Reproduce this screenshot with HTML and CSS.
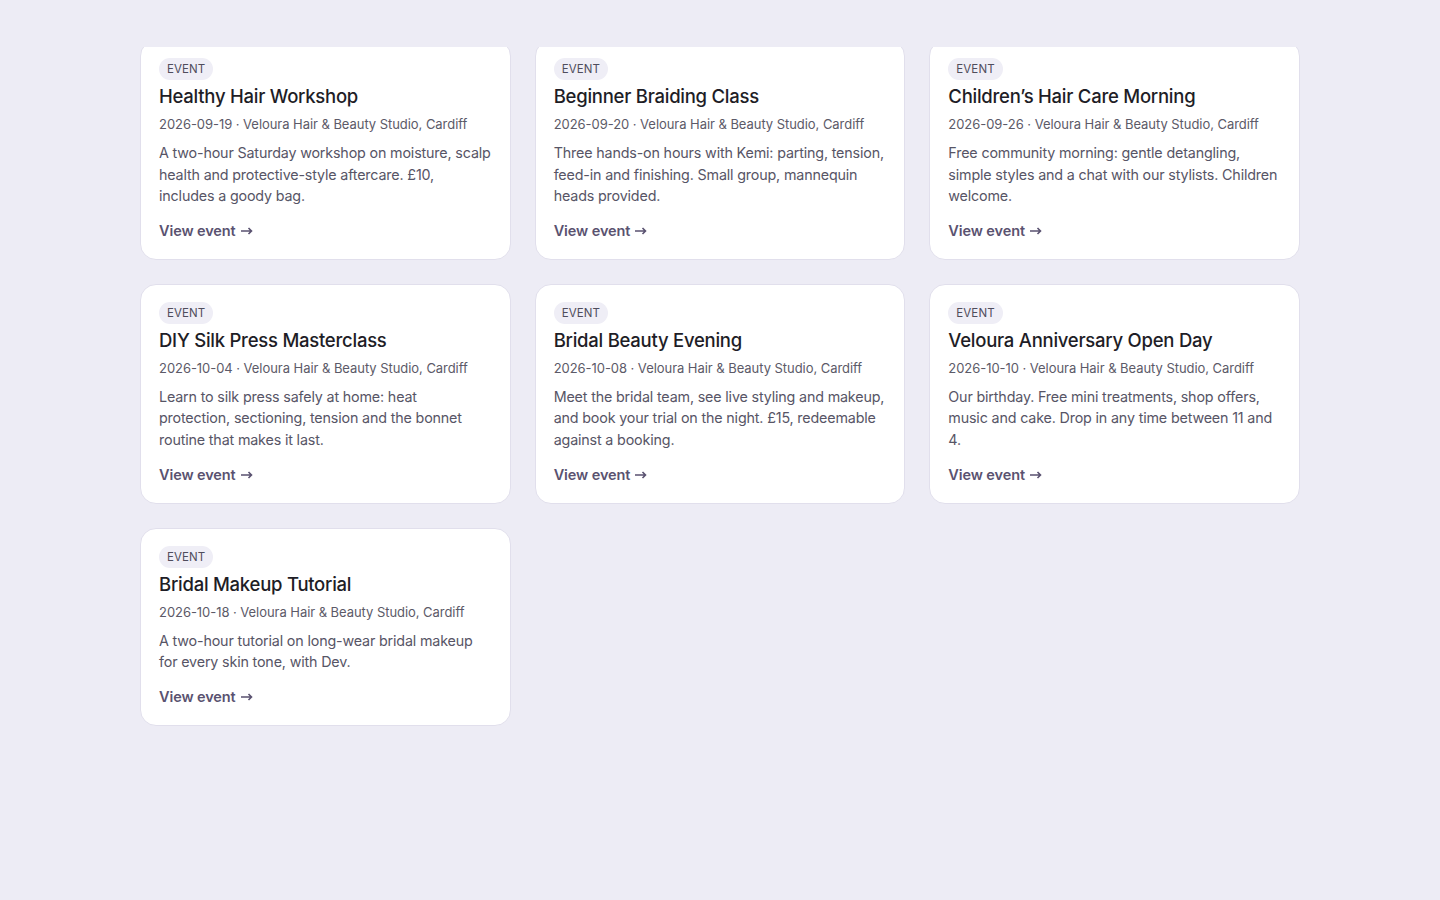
FILE: index.html
```html
<!DOCTYPE html>
<html lang="en">
<head>
  <meta charset="UTF-8" />
  <meta name="viewport" content="width=device-width, initial-scale=1.0"/>
  <title>Events – Veloura Hair &amp; Beauty Studio</title>
  <link rel="stylesheet" href="styles.css">
</head>
<body>

  <header class="topbar"></header>

  <main class="event-grid">
    <!-- Healthy Hair Workshop -->
    <article class="event-card">
      <span class="badge">EVENT</span>
      <h3>Healthy Hair Workshop</h3>
      <p class="meta">2026-09-19 · Veloura Hair &amp; Beauty Studio, Cardiff</p>
      <p class="desc">A two-hour Saturday workshop on moisture, scalp health and protective-style aftercare. £10, includes a goody bag.</p>
      <a class="more" href="#">View event <svg class="arrow" viewBox="0 0 12 8" width="12" height="8"><path d="M0 4h10.5M7.5 1l3 3-3 3" fill="none" stroke="currentColor" stroke-width="1.6"/></svg></a>
    </article>

    <!-- Beginner Braiding Class -->
    <article class="event-card">
      <span class="badge">EVENT</span>
      <h3>Beginner Braiding Class</h3>
      <p class="meta">2026-09-20 · Veloura Hair &amp; Beauty Studio, Cardiff</p>
      <p class="desc">Three hands-on hours with Kemi: parting, tension, feed-in and finishing. Small group, mannequin heads provided.</p>
      <a class="more" href="#">View event <svg class="arrow" viewBox="0 0 12 8" width="12" height="8"><path d="M0 4h10.5M7.5 1l3 3-3 3" fill="none" stroke="currentColor" stroke-width="1.6"/></svg></a>
    </article>

    <!-- Children's Hair Care Morning -->
    <article class="event-card">
      <span class="badge">EVENT</span>
      <h3>Children’s Hair Care Morning</h3>
      <p class="meta">2026-09-26 · Veloura Hair &amp; Beauty Studio, Cardiff</p>
      <p class="desc">Free community morning: gentle detangling, simple styles and a chat with our stylists. Children welcome.</p>
      <a class="more" href="#">View event <svg class="arrow" viewBox="0 0 12 8" width="12" height="8"><path d="M0 4h10.5M7.5 1l3 3-3 3" fill="none" stroke="currentColor" stroke-width="1.6"/></svg></a>
    </article>

    <!-- DIY Silk Press Masterclass -->
    <article class="event-card">
      <span class="badge">EVENT</span>
      <h3>DIY Silk Press Masterclass</h3>
      <p class="meta">2026-10-04 · Veloura Hair &amp; Beauty Studio, Cardiff</p>
      <p class="desc">Learn to silk press safely at home: heat protection, sectioning, tension and the bonnet routine that makes it last.</p>
      <a class="more" href="#">View event <svg class="arrow" viewBox="0 0 12 8" width="12" height="8"><path d="M0 4h10.5M7.5 1l3 3-3 3" fill="none" stroke="currentColor" stroke-width="1.6"/></svg></a>
    </article>

    <!-- Bridal Beauty Evening -->
    <article class="event-card">
      <span class="badge">EVENT</span>
      <h3>Bridal Beauty Evening</h3>
      <p class="meta">2026-10-08 · Veloura Hair &amp; Beauty Studio, Cardiff</p>
      <p class="desc">Meet the bridal team, see live styling and makeup, and book your trial on the night. £15, redeemable against a booking.</p>
      <a class="more" href="#">View event <svg class="arrow" viewBox="0 0 12 8" width="12" height="8"><path d="M0 4h10.5M7.5 1l3 3-3 3" fill="none" stroke="currentColor" stroke-width="1.6"/></svg></a>
    </article>

    <!-- Veloura Anniversary Open Day -->
    <article class="event-card">
      <span class="badge">EVENT</span>
      <h3>Veloura Anniversary Open Day</h3>
      <p class="meta">2026-10-10 · Veloura Hair &amp; Beauty Studio, Cardiff</p>
      <p class="desc">Our birthday. Free mini treatments, shop offers, music and cake. Drop in any time between 11 and 4.</p>
      <a class="more" href="#">View event <svg class="arrow" viewBox="0 0 12 8" width="12" height="8"><path d="M0 4h10.5M7.5 1l3 3-3 3" fill="none" stroke="currentColor" stroke-width="1.6"/></svg></a>
    </article>

    <!-- Bridal Makeup Tutorial -->
    <article class="event-card">
      <span class="badge">EVENT</span>
      <h3>Bridal Makeup Tutorial</h3>
      <p class="meta">2026-10-18 · Veloura Hair &amp; Beauty Studio, Cardiff</p>
      <p class="desc">A two-hour tutorial on long-wear bridal makeup for every skin tone, with Dev.</p>
      <a class="more" href="#">View event <svg class="arrow" viewBox="0 0 12 8" width="12" height="8"><path d="M0 4h10.5M7.5 1l3 3-3 3" fill="none" stroke="currentColor" stroke-width="1.6"/></svg></a>
    </article>
  </main>

</body>
</html>
```

FILE: styles.css
```css
body {
  font-family: Inter, "Noto Sans", sans-serif;
  background-color: #edecf5;
  color: #1e1d26;
  margin: 0;
  padding: 40px 0 60px;
}

/* sticky top bar covering the scrolled content */
.topbar {
  position: fixed;
  top: 0;
  left: 0;
  right: 0;
  height: 47px;
  background-color: #edecf5;
  z-index: 10;
}

.event-grid {
  display: grid;
  grid-template-columns: repeat(3, 1fr);
  align-items: start;
  gap: 24px;
  width: 1160px;
  margin: 0 auto;
}

.event-card {
  background: #ffffff;
  border: 1px solid #e1dfec;
  border-radius: 16px;
  padding: 17px 18px 17px;
  display: flex;
  flex-direction: column;
  align-items: flex-start;
}

.badge {
  display: inline-block;
  background: #efeef6;
  color: #4f4d5c;
  font-size: 11.5px;
  letter-spacing: 0.1px;
  line-height: 16px;
  padding: 3px 8px;
  border-radius: 999px;
}

.event-card h3 {
  font-size: 18.5px;
  font-weight: 500;
  letter-spacing: -0.25px;
  line-height: 26px;
  margin: 3px 0 5px;
  color: #1e1d26;
}

.meta {
  font-size: 13px;
  letter-spacing: -0.05px;
  line-height: 20px;
  color: #5c5a68;
  margin: 0 0 8px;
}

.desc {
  font-size: 14.3px;
  letter-spacing: -0.16px;
  line-height: 21.6px;
  color: #575566;
  margin: 0 0 13px;
}

.more {
  display: inline-flex;
  align-items: center;
  gap: 5px;
  font-size: 14.5px;
  font-weight: 600;
  letter-spacing: -0.1px;
  line-height: 22px;
  color: #5a5270;
  text-decoration: none;
}

.more:hover {
  text-decoration: underline;
}

.arrow {
  display: block;
  margin-top: 1px;
}
```
